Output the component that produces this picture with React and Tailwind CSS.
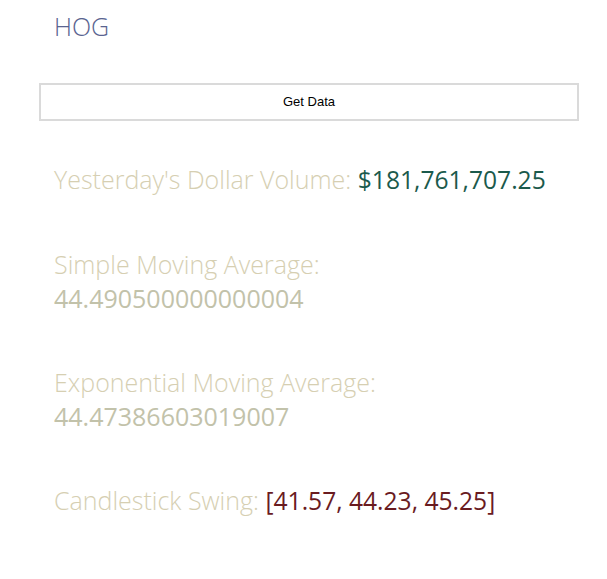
export default function App() {
  const label = "font-light text-[#d6cfb2]";
  return (
    <div className="bg-white w-[607px] h-[579px] pl-[39px] font-['Open_Sans',sans-serif]">
      <div className="w-[540px]">
        <h1 className="pl-[15px] pt-[9px] text-[25px] leading-[34px] font-light text-[#5a6490]">HOG</h1>
        <button className="mt-[40px] w-[540px] h-[38px] border-2 border-[#dadada] bg-white text-[13px] text-black font-['Liberation_Sans',Arial,sans-serif]">
          Get Data
        </button>
        <div className="px-[15px] text-[25px] leading-[34px]">
          <p className="mt-[41px]">
            <span className={label}>Yesterday's Dollar Volume: </span>
            <span className="text-[24.6px] text-[#1b5a4c]">$181,761,707.25</span>
          </p>
          <p className="mt-[50px]">
            <span className={`block ${label}`}>Simple Moving Average:</span>
            <span className="block text-[#c2c2aa]">44.490500000000004</span>
          </p>
          <p className="mt-[50px]">
            <span className={`block ${label}`}>Exponential Moving Average:</span>
            <span className="block text-[#c2c2aa]">44.47386603019007</span>
          </p>
          <p className="mt-[50px]">
            <span className={label}>Candlestick Swing: </span>
            <span className="text-[24.6px] text-[#6a1b1f]">[41.57, 44.23, 45.25]</span>
          </p>
        </div>
      </div>
    </div>
  );
}
